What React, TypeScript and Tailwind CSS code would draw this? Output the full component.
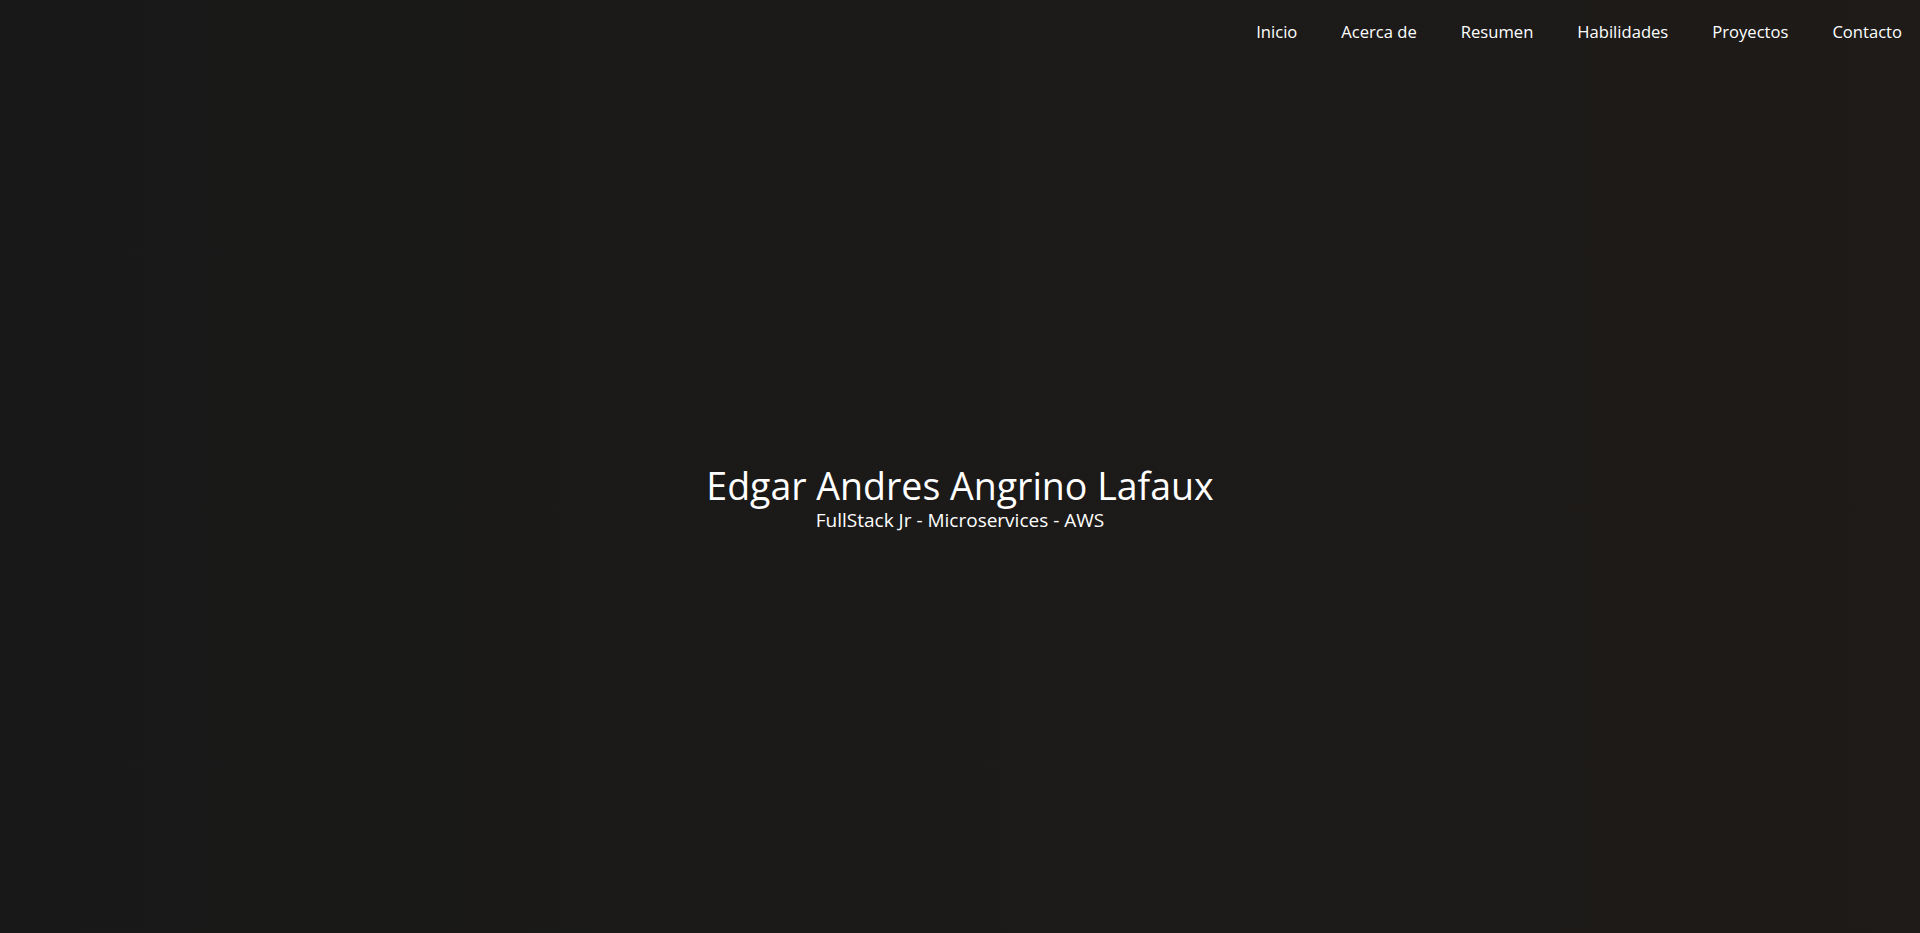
import React from "react";

const links = ["Inicio", "Acerca de", "Resumen", "Habilidades", "Proyectos", "Contacto"];

const App: React.FC = () => {
  return (
    <div
      className="flex flex-col h-screen bg-linear-to-r from-[#181818] via-[#1b1a18] to-[#1e1b19] text-white"
      style={{ fontFamily: '"Open Sans", "Noto Sans", sans-serif' }}
    >
      <header className="h-16 flex items-center justify-end pr-[18px]">
        <nav className="flex items-center gap-11">
          {links.map((l) => (
            <a key={l} href="#" className="text-[16.6px] text-white">
              {l}
            </a>
          ))}
        </nav>
      </header>

      <main className="flex-1 flex flex-col items-center justify-center pb-1">
        <h1 className="text-[37.5px] leading-[46px]">Edgar Andres Angrino Lafaux</h1>
        <p className="text-[19px] leading-[22px]">FullStack Jr - Microservices - AWS</p>
      </main>
    </div>
  );
};

export default App;
